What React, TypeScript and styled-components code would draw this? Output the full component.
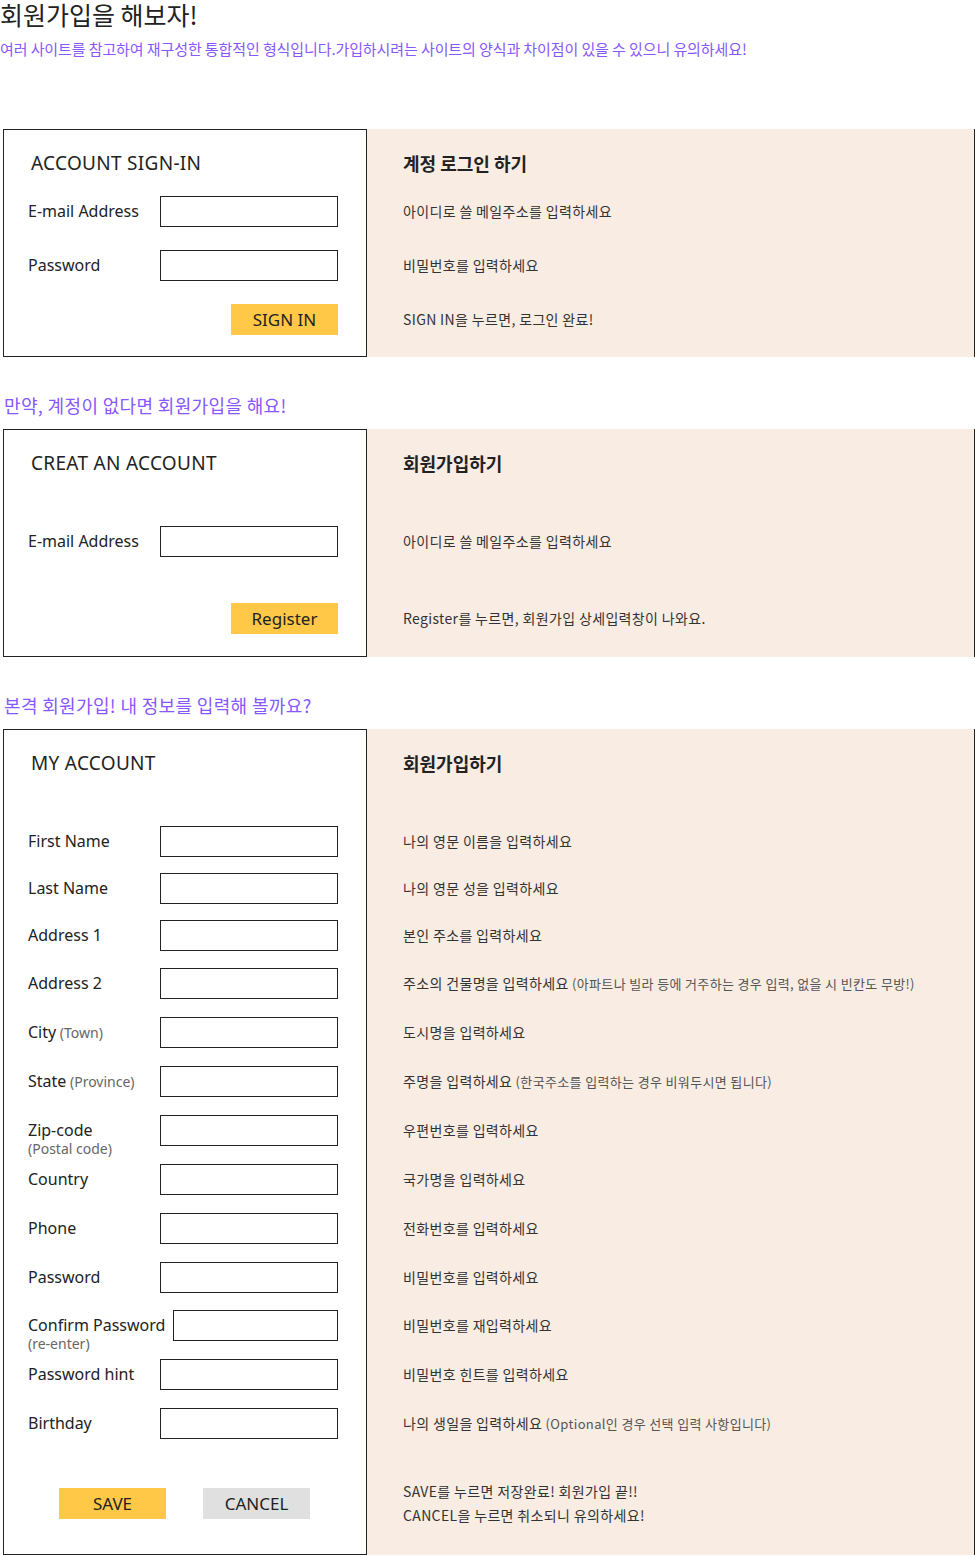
import React from 'react';
import styled, { createGlobalStyle } from 'styled-components';

const GlobalStyle = createGlobalStyle`
  html, body { margin: 0; padding: 0; background: #ffffff; }
  body {
    font-family: "Noto Sans", "Noto Sans CJK KR", sans-serif;
    color: #222222;
  }
  * { box-sizing: border-box; }
`;

const KR = `"Noto Sans CJK KR", "Noto Sans", sans-serif`;
const PURPLE = '#8757ff';

type Field = {
  kind: 'field';
  label: string;
  hint?: string;
  sub?: string;
  w?: number;
  mt: number;
  desc: string;
  note?: string;
};

type Actions = {
  kind: 'actions';
  buttons: { text: string; tone: 'primary' | 'muted' }[];
  align: 'end' | 'center';
  mt: number;
  desc: string[];
};

type Row = Field | Actions;

type Section = {
  heading?: string;
  title: string;
  infoTitle: string;
  pb: number;
  rows: Row[];
};

const sections: Section[] = [
  {
    title: 'ACCOUNT SIGN-IN',
    infoTitle: '계정 로그인 하기',
    pb: 21,
    rows: [
      { kind: 'field', label: 'E-mail Address', mt: 0, desc: '아이디로 쓸 메일주소를 입력하세요' },
      { kind: 'field', label: 'Password', mt: 23, desc: '비밀번호를 입력하세요' },
      {
        kind: 'actions',
        buttons: [{ text: 'SIGN IN', tone: 'primary' }],
        align: 'end',
        mt: 23,
        desc: ['SIGN IN을 누르면, 로그인 완료!'],
      },
    ],
  },
  {
    heading: '만약, 계정이 없다면 회원가입을 해요!',
    title: 'CREAT AN ACCOUNT',
    infoTitle: '회원가입하기',
    pb: 22,
    rows: [
      { kind: 'field', label: 'E-mail Address', mt: 30, desc: '아이디로 쓸 메일주소를 입력하세요' },
      {
        kind: 'actions',
        buttons: [{ text: 'Register', tone: 'primary' }],
        align: 'end',
        mt: 46,
        desc: ['Register를 누르면, 회원가입 상세입력창이 나와요.'],
      },
    ],
  },
  {
    heading: '본격 회원가입! 내 정보를 입력해 볼까요?',
    title: 'MY ACCOUNT',
    infoTitle: '회원가입하기',
    pb: 35,
    rows: [
      { kind: 'field', label: 'First Name', mt: 30, desc: '나의 영문 이름을 입력하세요' },
      { kind: 'field', label: 'Last Name', mt: 16, desc: '나의 영문 성을 입력하세요' },
      { kind: 'field', label: 'Address 1', mt: 16, desc: '본인 주소를 입력하세요' },
      {
        kind: 'field',
        label: 'Address 2',
        mt: 17,
        desc: '주소의 건물명을 입력하세요',
        note: '(아파트나 빌라 등에 거주하는 경우 입력, 없을 시 빈칸도 무방!)',
      },
      { kind: 'field', label: 'City', hint: '(Town)', mt: 18, desc: '도시명을 입력하세요' },
      {
        kind: 'field',
        label: 'State',
        hint: '(Province)',
        mt: 18,
        desc: '주명을 입력하세요',
        note: '(한국주소를 입력하는 경우 비워두시면 됩니다)',
      },
      { kind: 'field', label: 'Zip-code', sub: '(Postal code)', mt: 18, desc: '우편번호를 입력하세요' },
      { kind: 'field', label: 'Country', mt: 18, desc: '국가명을 입력하세요' },
      { kind: 'field', label: 'Phone', mt: 18, desc: '전화번호를 입력하세요' },
      { kind: 'field', label: 'Password', mt: 18, desc: '비밀번호를 입력하세요' },
      {
        kind: 'field',
        label: 'Confirm Password',
        sub: '(re-enter)',
        w: 165,
        mt: 17,
        desc: '비밀번호를 재입력하세요',
      },
      { kind: 'field', label: 'Password hint', mt: 18, desc: '비밀번호 힌트를 입력하세요' },
      {
        kind: 'field',
        label: 'Birthday',
        mt: 18,
        desc: '나의 생일을 입력하세요',
        note: '(Optional인 경우 선택 입력 사항입니다)',
      },
      {
        kind: 'actions',
        buttons: [
          { text: 'SAVE', tone: 'primary' },
          { text: 'CANCEL', tone: 'muted' },
        ],
        align: 'center',
        mt: 49,
        desc: ['SAVE를 누르면 저장완료! 회원가입 끝!!', 'CANCEL을 누르면 취소되니 유의하세요!'],
      },
    ],
  },
];

const Page = styled.main`
  width: 975px;
`;

const PageTitle = styled.h1`
  margin: 0;
  font-family: ${KR};
  font-size: 25px;
  line-height: 28px;
  font-weight: 400;
  color: #222222;
`;

const Intro = styled.p`
  margin: 11px 0 70px;
  font-family: ${KR};
  font-size: 15px;
  line-height: 20px;
  letter-spacing: -0.1px;
  color: ${PURPLE};
`;

const SectionHeading = styled.h2`
  margin: 36px 0 12px;
  padding-left: 4px;
  font-family: ${KR};
  font-size: 18px;
  line-height: 24px;
  font-weight: 400;
  letter-spacing: 0.35px;
  color: ${PURPLE};
`;

const Split = styled.section`
  display: flex;
  margin-left: 3px;
  width: 972px;
`;

const Card = styled.form<{ $pb: number }>`
  width: 364px;
  flex: none;
  border: 1px solid #222222;
  background: #ffffff;
  padding: 0 28px ${(p) => p.$pb}px 24px;
  display: flex;
  flex-direction: column;
`;

const Info = styled.div<{ $pb: number }>`
  flex: 1;
  background: #f8ece3;
  border-right: 1px solid #222222;
  padding: 1px 0 ${(p) => p.$pb + 1}px 36px;
  display: flex;
  flex-direction: column;
`;

const TitleBlock = styled.div`
  height: 66px;
  display: flex;
  align-items: center;
`;

const CardTitle = styled.h3`
  margin: 0;
  padding-left: 3px;
  font-size: 19px;
  font-weight: 400;
  letter-spacing: 0.3px;
  color: #222222;
`;

const InfoTitle = styled.h3`
  margin: 0;
  font-family: ${KR};
  font-size: 18px;
  font-weight: 700;
  color: #222222;
`;

const Line = styled.div<{ $mt: number; $align?: 'start' | 'center' }>`
  height: 31px;
  margin-top: ${(p) => p.$mt}px;
  display: flex;
  align-items: ${(p) => (p.$align === 'start' ? 'flex-start' : 'center')};
  flex: none;
`;

const Label = styled.label`
  display: flex;
  flex-direction: column;
  font-size: 16px;
  line-height: 31px;
  color: #222222;
  white-space: nowrap;
`;

const Hint = styled.span`
  font-size: 14px;
  color: #666666;
`;

const Sub = styled.span`
  display: block;
  margin-top: -4px;
  font-size: 14px;
  line-height: 14px;
  color: #666666;
`;

const Input = styled.input<{ $w: number }>`
  width: ${(p) => p.$w}px;
  height: 31px;
  margin: 0 0 0 auto;
  padding: 0 6px;
  border: 1px solid #222222;
  border-radius: 0;
  background: #ffffff;
  font: inherit;
  outline: none;
  flex: none;
`;

const ActionBar = styled.div<{ $mt: number; $align: 'end' | 'center' }>`
  height: 31px;
  margin-top: ${(p) => p.$mt}px;
  display: flex;
  justify-content: ${(p) => (p.$align === 'end' ? 'flex-end' : 'center')};
  padding-left: ${(p) => (p.$align === 'center' ? 3 : 0)}px;
  gap: 37px;
  flex: none;
`;

const Button = styled.button<{ $tone: 'primary' | 'muted' }>`
  width: 107px;
  height: 31px;
  border: none;
  border-radius: 0;
  padding: 0;
  background: ${(p) => (p.$tone === 'primary' ? '#ffc847' : '#e0e0e0')};
  font-family: "Noto Sans", sans-serif;
  font-size: 17px;
  color: #222222;
  cursor: pointer;
`;

const Desc = styled.p`
  margin: 0 0 1px;
  font-family: ${KR};
  font-size: 14px;
  line-height: 24px;
  letter-spacing: 0.35px;
  color: #333333;
  white-space: nowrap;
`;

const Note = styled.span`
  font-size: 13px;
  color: #555555;
`;

function FieldRow({ row }: { row: Field }) {
  return (
    <Line $mt={row.mt} $align={row.sub ? 'start' : 'center'}>
      <Label>
        <span>
          {row.label}
          {row.hint && <Hint> {row.hint}</Hint>}
        </span>
        {row.sub && <Sub>{row.sub}</Sub>}
      </Label>
      <Input $w={row.w ?? 178} type="text" />
    </Line>
  );
}

function SectionView({ section }: { section: Section }) {
  return (
    <>
      {section.heading && <SectionHeading>{section.heading}</SectionHeading>}
      <Split>
        <Card $pb={section.pb} onSubmit={(e) => e.preventDefault()}>
          <TitleBlock>
            <CardTitle>{section.title}</CardTitle>
          </TitleBlock>
          {section.rows.map((row, i) =>
            row.kind === 'field' ? (
              <FieldRow key={i} row={row} />
            ) : (
              <ActionBar key={i} $mt={row.mt} $align={row.align}>
                {row.buttons.map((b) => (
                  <Button key={b.text} type="button" $tone={b.tone}>
                    {b.text}
                  </Button>
                ))}
              </ActionBar>
            )
          )}
        </Card>
        <Info $pb={section.pb}>
          <TitleBlock>
            <InfoTitle>{section.infoTitle}</InfoTitle>
          </TitleBlock>
          {section.rows.map((row, i) => (
            <Line key={i} $mt={row.mt}>
              {row.kind === 'field' ? (
                <Desc>
                  {row.desc}
                  {row.note && <Note> {row.note}</Note>}
                </Desc>
              ) : (
                <Desc>
                  {row.desc.map((d, j) => (
                    <React.Fragment key={j}>
                      {j > 0 && <br />}
                      {d}
                    </React.Fragment>
                  ))}
                </Desc>
              )}
            </Line>
          ))}
        </Info>
      </Split>
    </>
  );
}

export default function App() {
  return (
    <Page>
      <GlobalStyle />
      <PageTitle>회원가입을 해보자!</PageTitle>
      <Intro>
        여러 사이트를 참고하여 재구성한 통합적인 형식입니다.가입하시려는 사이트의 양식과 차이점이 있을 수 있으니
        유의하세요!
      </Intro>
      {sections.map((s, i) => (
        <SectionView key={i} section={s} />
      ))}
    </Page>
  );
}
